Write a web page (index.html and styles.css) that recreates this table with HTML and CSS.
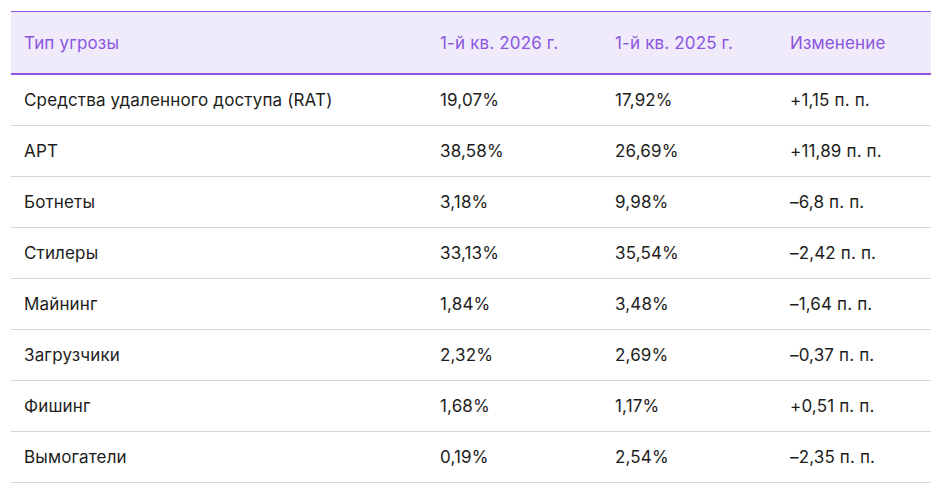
FILE: index.html
```html
<!DOCTYPE html>
<html lang="ru">
<head>
<meta charset="utf-8">
<link rel="stylesheet" href="styles.css">
</head>
<body>
<div class="wrap">
<table class="threats">
<thead>
<tr><th class="c1">Тип угрозы</th><th class="c2">1-й кв. 2026 г.</th><th class="c3">1-й кв. 2025 г.</th><th class="c4">Изменение</th></tr>
</thead>
<tbody>
<tr><td>Средства удаленного доступа (RAT)</td><td>19,07%</td><td>17,92%</td><td>+1,15 п. п.</td></tr>
<tr><td>APT</td><td>38,58%</td><td>26,69%</td><td>+11,89 п. п.</td></tr>
<tr><td>Ботнеты</td><td>3,18%</td><td>9,98%</td><td>–6,8 п. п.</td></tr>
<tr><td>Стилеры</td><td>33,13%</td><td>35,54%</td><td>–2,42 п. п.</td></tr>
<tr><td>Майнинг</td><td>1,84%</td><td>3,48%</td><td>–1,64 п. п.</td></tr>
<tr><td>Загрузчики</td><td>2,32%</td><td>2,69%</td><td>–0,37 п. п.</td></tr>
<tr><td>Фишинг</td><td>1,68%</td><td>1,17%</td><td>+0,51 п. п.</td></tr>
<tr><td>Вымогатели</td><td>0,19%</td><td>2,54%</td><td>–2,35 п. п.</td></tr>
</tbody>
</table>
</div>
</body>
</html>
```
FILE: styles.css
```css
html, body {
  margin: 0;
  padding: 0;
  background: #ffffff;
}
.wrap {
  padding: 11px 17px 0 11px;
}
.threats {
  width: 920px;
  border-collapse: collapse;
  font-family: Inter, "Noto Sans", sans-serif;
  font-size: 17px;
  letter-spacing: 0.15px;
  color: #1d1d1b;
  table-layout: fixed;
}
.threats th {
  background: #f0ebfb;
  color: #8b55df;
  font-weight: 400;
  text-align: left;
  height: 61px;
  padding: 0 0 0 13px;
  border-top: 1px solid #8b55df;
  border-bottom: 2px solid #8b55df;
  vertical-align: middle;
}
.threats .c1 { width: 403px; }
.threats .c2 { width: 162px; }
.threats .c3 { width: 162px; }
.threats td {
  height: 50px;
  padding: 0 0 0 13px;
  border-bottom: 1px solid #d6d6d6;
  vertical-align: middle;
}
```
